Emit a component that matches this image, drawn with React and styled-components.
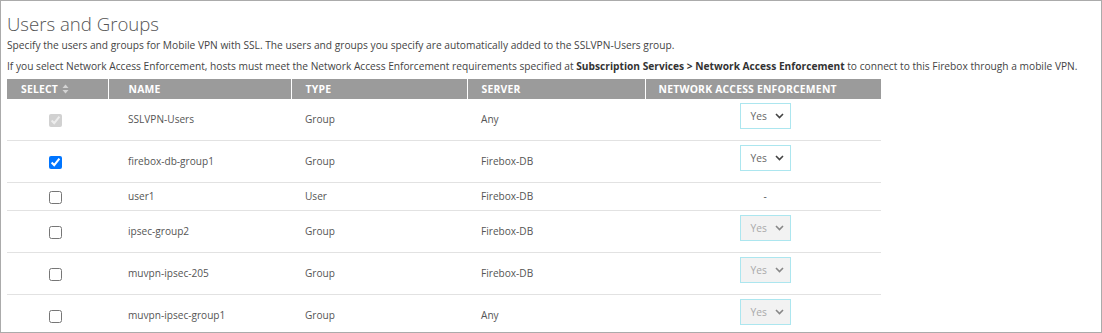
import React from "react";
import styled, { createGlobalStyle } from "styled-components";

const Global = createGlobalStyle`
  html, body { margin: 0; padding: 0; background: #fff; }
  body { font-family: "Open Sans", "Liberation Sans", sans-serif; }
`;

const Frame = styled.div`
  box-sizing: border-box;
  width: 1102px;
  height: 333px;
  border: 1px solid #ababab;
  padding: 12px 0 0 6px;
  overflow: hidden;
`;

const Title = styled.h2`
  margin: 0;
  font-family: "Open Sans", "Liberation Sans", sans-serif;
  font-weight: 300;
  font-size: 18.6px;
  line-height: 21px;
  color: #555;
`;

const Para = styled.p`
  margin: ${(p) => p.$mt}px 0 0;
  font-size: 10.2px;
  line-height: 16px;
  color: #444;
  white-space: nowrap;
  b { font-weight: 700; color: #333; }
`;

const Table = styled.table`
  margin-top: 5px;
  border-collapse: collapse;
  table-layout: fixed;
  width: 874px;
  font-size: 10.1px;
  color: #555;
`;

const Th = styled.th`
  width: ${(p) => p.$w}px;
  height: 20px;
  padding: 0 0 0 ${(p) => p.$pl ?? 14}px;
  box-sizing: border-box;
  background: #9b9b9b;
  color: #fff;
  font-size: 10.4px;
  font-weight: 700;
  letter-spacing: 0.2px;
  text-align: left;
  border-left: 1px solid #fff;
  &:first-child { border-left: none; }
`;

const Tr = styled.tr`
  border-bottom: 1px solid #e2e2e2;
`;

const Td = styled.td`
  padding: 4px 0 4px ${(p) => p.$pl ?? 14}px;
  line-height: 19px;
  vertical-align: middle;
  text-align: ${(p) => (p.$center ? "center" : "left")};
  white-space: nowrap;
`;

const SortIcon = styled.svg`
  margin-left: 4px;
  vertical-align: -1px;
`;

const Check = styled.input`
  margin: 0;
  width: 13px;
  height: 13px;
  vertical-align: middle;
  position: relative;
  left: -9px;
`;

const SelectBox = styled.div`
  box-sizing: border-box;
  display: inline-flex;
  align-items: center;
  justify-content: space-between;
  width: 51px;
  height: 26px;
  margin: 0 0 7px 4px;
  padding: 0 6px 0 10px;
  border: 1px solid #ace6ef;
  background: ${(p) => (p.$disabled ? "#f2f2f2" : "#fff")};
  color: ${(p) => (p.$disabled ? "#a9a9a9" : "#666")};
  font-size: 10.2px;
  line-height: 1;
  vertical-align: middle;
`;

const Dash = styled.span`
  display: inline-block;
  padding-left: 4px;
`;

function Chevron({ disabled }) {
  return (
    <svg width="9" height="6" viewBox="0 0 9 6">
      <path d="M1 1 L4.5 4.5 L8 1" fill="none" stroke={disabled ? "#888" : "#444"} strokeWidth="1.6" />
    </svg>
  );
}

function YesSelect({ disabled }) {
  return (
    <SelectBox $disabled={disabled} role="combobox" aria-disabled={disabled}>
      <span>Yes</span>
      <Chevron disabled={disabled} />
    </SelectBox>
  );
}

const rows = [
  { name: "SSLVPN-Users", type: "Group", server: "Any", checked: true, cbDisabled: true, nae: "yes" },
  { name: "firebox-db-group1", type: "Group", server: "Firebox-DB", checked: true, nae: "yes" },
  { name: "user1", type: "User", server: "Firebox-DB", nae: "dash" },
  { name: "ipsec-group2", type: "Group", server: "Firebox-DB", nae: "disabled" },
  { name: "muvpn-ipsec-205", type: "Group", server: "Firebox-DB", nae: "disabled" },
  { name: "muvpn-ipsec-group1", type: "Group", server: "Any", nae: "disabled" },
];

export default function App() {
  return (
    <>
      <Global />
      <Frame>
        <Title>Users and Groups</Title>
        <Para $mt={3}>
          Specify the users and groups for Mobile VPN with SSL. The users and groups you specify are automatically added to the SSLVPN-Users group.
        </Para>
        <Para $mt={5}>
          If you select Network Access Enforcement, hosts must meet the Network Access Enforcement requirements specified at{" "}
          <b>Subscription Services &gt; Network Access Enforcement</b> to connect to this Firebox through a mobile VPN.
        </Para>
        <Table>
          <thead>
            <tr>
              <Th $w={101}>
                SELECT
                <SortIcon width="7" height="10" viewBox="0 0 7 10">
                  <path d="M3.5 0.5 L6.5 4 L0.5 4 Z" fill="#d4d4d4" />
                  <path d="M3.5 9.5 L6.5 6 L0.5 6 Z" fill="#d4d4d4" />
                </SortIcon>
              </Th>
              <Th $w={183} $pl={20}>NAME</Th>
              <Th $w={176}>TYPE</Th>
              <Th $w={178}>SERVER</Th>
              <Th $w={236} $pl={13}>NETWORK ACCESS ENFORCEMENT</Th>
            </tr>
          </thead>
          <tbody>
            {rows.map((r) => (
              <Tr key={r.name}>
                <Td $center>
                  <Check type="checkbox" defaultChecked={r.checked} disabled={r.cbDisabled} />
                </Td>
                <Td $pl={20}>{r.name}</Td>
                <Td>{r.type}</Td>
                <Td>{r.server}</Td>
                <Td $center $pl={0}>
                  {r.nae === "dash" ? <Dash>-</Dash> : <YesSelect disabled={r.nae === "disabled"} />}
                </Td>
              </Tr>
            ))}
          </tbody>
        </Table>
      </Frame>
    </>
  );
}
